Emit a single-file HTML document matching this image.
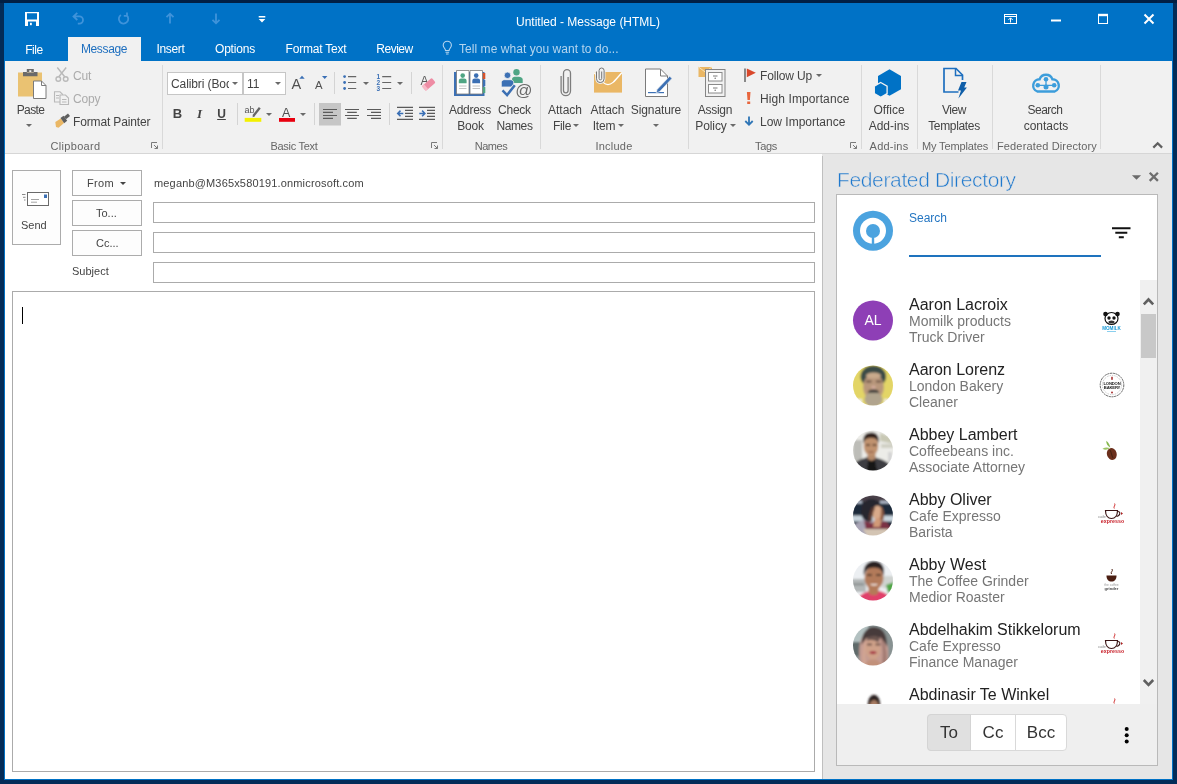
<!DOCTYPE html>
<html><head><meta charset="utf-8"><title>Untitled - Message (HTML)</title>
<style>
*{box-sizing:border-box;margin:0;padding:0}
html,body{width:1177px;height:784px;overflow:hidden;background:#032c58;font-family:"Liberation Sans",sans-serif;font-size:12px;color:#444}
#s{position:absolute;left:0;top:0;width:1177px;height:784px;overflow:hidden;will-change:transform}
#s div,#s svg,#s span{position:absolute}
#s span.i{position:static}
.blue{left:4px;top:3px;width:1169px;height:777px;background:#0072c6}
.rib{left:5px;top:61px;width:1167px;height:93px;background:#f1f1f1;border-bottom:1px solid #d6d6d6}
.wht{left:5px;top:154px;width:817px;height:625px;background:#fff}
.t{white-space:nowrap;font-size:12px;line-height:14px;color:#444;text-align:center}
.w{color:#fff}
.g{color:#666}
.d{color:#ababab}
.sep{width:1px;background:#d9d9d9;top:65px;height:84px}
.sp2{width:1px;background:#d4d4d4;height:22px}
.box{background:#fff;border:1px solid #c6c6c6}
.btn{background:#fdfdfd;border:1px solid #acacac}
.fld{background:#fff;border:1px solid #ababab}
.f{white-space:nowrap;font-size:11px;line-height:13px;color:#444}
.ar{width:0;height:0;border-left:3px solid transparent;border-right:3px solid transparent;border-top:3px solid #6a6a6a}
.n{left:909px;font-size:16px;line-height:18px;color:#222;white-space:nowrap}
.c{left:909px;font-size:14px;line-height:16px;color:#767676;white-space:nowrap}
.b{top:723px;font-size:17px;line-height:20px;color:#333;text-align:center}
</style></head><body>
<div id="s">
<div style="left:0;top:0;width:1177px;height:3px;background:#011f44"></div>
<div class="blue"></div>
<div class="rib"></div>
<div class="wht"></div>

<!-- title bar -->
<div class="t w" style="left:516px;top:15px;width:143px">Untitled - Message (HTML)</div>
<!-- tabs -->
<div style="left:68px;top:37px;width:73px;height:24px;background:#f1f1f1"></div>
<div class="t w" style="left:24px;top:43px;width:20px;letter-spacing:-.4px">File</div>
<div class="t" style="left:79px;top:42px;width:50px;color:#1e6fbf;letter-spacing:-.35px">Message</div>
<div class="t w" style="left:154px;top:42px;width:33px;letter-spacing:-.3px">Insert</div>
<div class="t w" style="left:212px;top:42px;width:46px;letter-spacing:-.2px">Options</div>
<div class="t w" style="left:284px;top:42px;width:64px;letter-spacing:-.2px">Format Text</div>
<div class="t w" style="left:375px;top:42px;width:39px;letter-spacing:-.5px">Review</div>
<div class="t" style="left:459px;top:42px;width:165px;color:#b4d5ef;text-align:left;letter-spacing:.05px">Tell me what you want to do...</div>
<!-- ribbon separators -->
<div class="sep" style="left:162px"></div>
<div class="sep" style="left:442px"></div>
<div class="sep" style="left:540px"></div>
<div class="sep" style="left:688px"></div>
<div class="sep" style="left:861px"></div>
<div class="sep" style="left:917px"></div>
<div class="sep" style="left:992px"></div>
<div class="sep" style="left:1100px"></div>
<div class="sp2" style="left:334px;top:72px"></div>
<div class="sp2" style="left:411px;top:72px"></div>
<div class="sp2" style="left:237px;top:103px"></div>
<div class="sp2" style="left:314px;top:103px"></div>
<div class="sp2" style="left:389px;top:103px"></div>

<!-- Clipboard labels -->
<div class="t" style="left:10px;top:103px;width:41px;letter-spacing:-.6px">Paste</div>
<div class="ar" style="left:26px;top:124px"></div>
<div class="t d" style="left:73px;top:69px;letter-spacing:-.2px">Cut</div>
<div class="t d" style="left:73px;top:92px;letter-spacing:-.2px">Copy</div>
<div class="t" style="left:73px;top:115px;letter-spacing:-.15px">Format Painter</div>
<div class="t g" style="left:45px;top:139px;width:61px;font-size:11px;letter-spacing:0.31px">Clipboard</div>

<!-- Basic text -->
<div class="box" style="left:167px;top:72px;width:76px;height:23px"></div>
<div class="box" style="left:243px;top:72px;width:43px;height:23px"></div>
<div class="t" style="left:171px;top:77px;width:58px;overflow:hidden;text-align:left;letter-spacing:-.1px">Calibri (Body)</div>
<div class="ar" style="left:232px;top:82px"></div>
<div class="t" style="left:247px;top:77px;text-align:left">11</div>
<div class="ar" style="left:275px;top:82px"></div>
<div class="t" style="left:171px;top:107px;width:13px;font-weight:bold;font-size:13px">B</div>
<div class="t" style="left:193px;top:107px;width:13px;font-weight:bold;font-style:italic;font-size:13px;font-family:'Liberation Serif',serif">I</div>
<div class="t" style="left:215px;top:107px;width:13px;font-weight:bold;font-size:12px;text-decoration:underline">U</div>
<div class="ar" style="left:266px;top:113px"></div>
<div class="ar" style="left:300px;top:113px"></div>
<div class="ar" style="left:363px;top:82px"></div>
<div class="ar" style="left:397px;top:82px"></div>
<div class="t g" style="left:264px;top:139px;width:60px;font-size:11px;letter-spacing:-0.29px">Basic Text</div>

<!-- Names -->
<div class="t" style="left:440px;top:103px;width:60px;letter-spacing:-.3px">Address</div>
<div class="t" style="left:440px;top:119px;width:61px;letter-spacing:-.2px">Book</div>
<div class="t" style="left:485px;top:103px;width:59px;letter-spacing:-.25px">Check</div>
<div class="t" style="left:485px;top:119px;width:59px;letter-spacing:-.4px">Names</div>
<div class="t g" style="left:461px;top:139px;width:60px;font-size:11px;letter-spacing:-0.45px">Names</div>

<!-- Include -->
<div class="t" style="left:535px;top:103px;width:60px">Attach</div>
<div class="t" style="left:542px;top:119px;width:40px;letter-spacing:-.3px">File</div>
<div class="ar" style="left:573px;top:124px"></div>
<div class="t" style="left:577px;top:103px;width:61px">Attach</div>
<div class="t" style="left:584px;top:119px;width:40px;letter-spacing:-.2px">Item</div>
<div class="ar" style="left:618px;top:124px"></div>
<div class="t" style="left:626px;top:103px;width:60px;letter-spacing:-.12px">Signature</div>
<div class="ar" style="left:653px;top:124px"></div>
<div class="t g" style="left:584px;top:139px;width:60px;font-size:11px;letter-spacing:0.25px">Include</div>

<!-- Tags -->
<div class="t" style="left:685px;top:103px;width:60px;letter-spacing:-.29px">Assign</div>
<div class="t" style="left:681px;top:119px;width:60px;letter-spacing:-.1px">Policy</div>
<div class="ar" style="left:730px;top:124px"></div>
<div class="t" style="left:760px;top:69px;letter-spacing:-.16px">Follow Up</div>
<div class="ar" style="left:816px;top:74px"></div>
<div class="t" style="left:760px;top:92px;letter-spacing:.1px">High Importance</div>
<div class="t" style="left:760px;top:115px">Low Importance</div>
<div class="t g" style="left:736px;top:139px;width:60px;font-size:11px;letter-spacing:-0.34px">Tags</div>

<!-- Add-ins -->
<div class="t" style="left:859px;top:103px;width:60px">Office</div>
<div class="t" style="left:859px;top:119px;width:60px">Add-ins</div>
<div class="t g" style="left:859px;top:139px;width:60px;font-size:11px;letter-spacing:0.21px">Add-ins</div>
<div class="t" style="left:924px;top:103px;width:60px;letter-spacing:-.47px">View</div>
<div class="t" style="left:914px;top:119px;width:80px;letter-spacing:-.34px">Templates</div>
<div class="t g" style="left:915px;top:139px;width:80px;font-size:11px;letter-spacing:-0.12px">My Templates</div>
<div class="t" style="left:1015px;top:103px;width:60px;letter-spacing:-.5px">Search</div>
<div class="t" style="left:1016px;top:119px;width:60px">contacts</div>
<div class="t g" style="left:987px;top:139px;width:120px;font-size:11px;letter-spacing:0.15px">Federated Directory</div>
<svg id="rsvg" style="left:0;top:0" width="1177" height="160" viewBox="0 0 1177 160" font-family="Liberation Sans, sans-serif">
<!-- QAT -->
<path fill="#fff" fill-rule="evenodd" d="M25 12h14v14h-14z M27 13.3h10v6.2h-10z M28 21.5h8v4.5h-8z"/>
<rect x="30" y="22.8" width="1.8" height="2.4" fill="#fff"/>
<g fill="none" stroke="#3f93da" stroke-width="1.800">
 <path d="M77.300 12.800l-3.800 3.600 3.800 3.600M74 16.400h5.400a3.600 3.600 0 0 1 0 7.200h-1.600"/>
 <path d="M126.600 15.300A4.700 4.700 0 1 1 120.900 15M123.800 15.800h3.200v-3.300"/>
 <path d="M170 23.500v-9.500M166.500 17.200l3.500-3.500 3.500 3.500"/>
 <path d="M216 13.500v9.500M212.500 19.800l3.500 3.500 3.500-3.500"/>
</g>
<path fill="#fff" d="M258.7 16h6.6v1.4h-6.6z M258.7 19h6.6l-3.3 3.6z"/>
<!-- window controls -->
<g fill="none" stroke="#fff">
 <rect x="1004.5" y="14.5" width="12" height="9"/>
 <path d="M1004.5 16.5h12" stroke-width="1"/>
 <path d="M1010.5 22.5v-4.5M1008.3 20l2.2-2.2 2.2 2.2" stroke-width="1"/>
 <path d="M1051 20.5h10" stroke-width="2"/>
 <rect x="1098.5" y="15" width="9" height="8.5" />
 <path d="M1098 15h10" stroke-width="2.4"/>
 <path d="M1144.5 14.5l9 9M1153.5 14.5l-9 9" stroke-width="2"/>
</g>
<!-- lightbulb -->
<g fill="none" stroke="#b4d5ef" stroke-width="1.1">
 <path d="M445.5 50.5c0-2-2.3-2.6-2.3-5.2a4.1 4.1 0 0 1 8.2 0c0 2.6-2.3 3.2-2.3 5.2z"/>
 <path d="M445.5 52.3h3.6M446 54h2.6"/>
</g>

<!-- Paste -->
<rect x="18" y="72.5" width="24" height="24" fill="#eac272"/>
<path fill="#6a6a6a" fill-rule="evenodd" d="M23 72h14.5v4.2h-14.5z M26.8 69h7v3.5h-7z M29.3 70.3h2v1.7h-2z"/>
<path d="M33.5 81h8l4.5 4.5v13h-12.500z" fill="#fff" stroke="#7b7b7b"/>
<path d="M41.5 81v4.500h4.500" fill="none" stroke="#7b7b7b"/>
<!-- Cut -->
<g fill="none" stroke="#b9b9b9" stroke-width="1.4">
 <path d="M57.300 67.500l7.400 9.300M66.200 67.500l-7.400 9.300"/>
 <circle cx="58.300" cy="79" r="2.300"/><circle cx="65.700" cy="79" r="2.300"/>
</g>
<!-- Copy -->
<g fill="#f1f1f1" stroke="#b9b9b9" stroke-width="1.1">
 <path d="M54.500 91.800h5.500l2.500 2.500v7.700h-8z"/>
 <path d="M60 95h5.500l3 3v6.500h-8.500z"/>
 <path d="M56 95.500h3M56 98h3M62 99.500h4.500M62 102h4.500" stroke-width="1"/>
</g>
<!-- Format painter -->
<path d="M55.300 122l5.500-3.600 3.200 4.600-5.400 4.800-2.600-.8z" fill="#eab765"/>
<path d="M60.500 118l3-2.200 3.700 5-3 2.400z" fill="#5e5e5e"/>
<path d="M65 118l4-3.300" stroke="#5e5e5e" stroke-width="3.200"/>

<!-- Grow / shrink font -->
<text x="291.500" y="88.800" font-size="14.500" fill="#505050">A</text>
<path d="M299.300 78.800h5.400l-2.700-3z" fill="#3a6fb5"/>
<text x="315" y="88.800" font-size="11.300" fill="#505050">A</text>
<path d="M322 76h5.400l-2.700 3z" fill="#3a6fb5"/>
<!-- bullets -->
<g fill="#3a6fb5"><circle cx="344.600" cy="76.600" r="1.400"/><circle cx="344.600" cy="82.500" r="1.400"/><circle cx="344.600" cy="88.500" r="1.400"/></g>
<path d="M348 76.600h8.200M348 82.500h8.200M348 88.500h8.200" stroke="#666" stroke-width="1.200"/>
<!-- numbering -->
<g fill="#3a6fb5" font-size="6.500" font-weight="bold"><text x="376.500" y="79">1</text><text x="376.500" y="85">2</text><text x="376.500" y="91">3</text></g>
<path d="M382.200 76.600h9M382.200 82.500h9M382.200 88.500h9" stroke="#666" stroke-width="1.200"/>
<!-- clear formatting -->
<text x="420.500" y="84.500" font-size="12" fill="#5a5a5a">A</text>
<g transform="rotate(-40 428.700 84.300)"><rect x="422.200" y="81.300" width="13" height="6.200" rx="1.500" fill="#ee8ca4"/><rect x="422.200" y="81.300" width="3" height="6.200" fill="#f6b9c7"/></g>

<!-- highlight -->
<text x="244.600" y="113.300" font-size="9" fill="#555">ab</text>
<path d="M259.800 107.800l-6.500 8.200" stroke="#666" stroke-width="2.300"/>
<path d="M252.500 117.300l.6-2 1.500 1.100z" fill="#666"/>
<rect x="244.700" y="117.900" width="16.600" height="3.900" fill="#f3f000"/>
<!-- font colour -->
<text x="282" y="117.200" font-size="12.500" fill="#505050">A</text>
<rect x="279" y="118" width="16" height="3.800" fill="#e8000f"/>
<!-- alignment -->
<rect x="319" y="103" width="22" height="22.500" fill="#c6c6c6"/>
<g stroke="#5a5a5a" stroke-width="1.200">
 <path d="M323 109.500h14M323 112.400h10M323 115.500h14M323 118.400h10"/>
 <path d="M345 109.500h14M347.200 112.400h9.600M345 115.500h14M347.200 118.400h9.600"/>
 <path d="M367 109.500h14M371 112.400h10M367 115.500h14M371 118.400h10"/>
 <path d="M397 107.400h16M405 110.400h8M405 113.400h8M405 116.400h8M397 119.400h16"/>
 <path d="M419 107.400h16M427 110.400h8M427 113.400h8M427 116.400h8M419 119.400h16"/>
</g>
<g fill="none" stroke="#3a6fb5" stroke-width="1.500">
 <path d="M403.300 113.400h-5.300M400.500 110.600l-2.800 2.800 2.800 2.800"/>
 <path d="M419.300 113.400h5.300M422.100 110.600l2.800 2.800-2.800 2.800"/>
</g>
<!-- launchers -->
<g fill="none" stroke="#7a7a7a" stroke-width="1">
 <path d="M151.500 148v-5.500h5.500"/><path d="M154 145l3.500 3.500M157.500 145.500v3h-3"/>
</g>
<g fill="none" stroke="#7a7a7a" stroke-width="1" transform="translate(280 0)">
 <path d="M151.500 148v-5.500h5.500"/><path d="M154 145l3.500 3.500M157.500 145.500v3h-3"/>
</g>
<g fill="none" stroke="#7a7a7a" stroke-width="1" transform="translate(699 0)">
 <path d="M151.500 148v-5.500h5.500"/><path d="M154 145l3.500 3.500M157.500 145.500v3h-3"/>
</g>
<!-- collapse chevron -->
<path d="M1153.300 147.600l4.400-4.400 4.400 4.400" fill="none" stroke="#606060" stroke-width="2.200"/>
<!-- Address book -->
<rect x="454" y="72" width="30.500" height="24" fill="#3c70b4"/>
<rect x="482" y="73" width="3.300" height="6" fill="#d6532c"/><rect x="482" y="80" width="3.300" height="6" fill="#3c70b4"/><rect x="482" y="87" width="3.300" height="6" fill="#4fa584"/>
<path d="M456.500 70.500h12.500v23.500h-12.500z M470 70.500h12.500v23.500h-12.500z" fill="#fff" stroke="#7b7b7b" stroke-width=".8"/>
<g fill="#4fa584"><circle cx="462.700" cy="75.600" r="2.300"/><path d="M458.800 83.200v-2.300c0-1.500 1.200-2.300 2.300-2.300h3.200c1.100 0 2.300.8 2.300 2.300v2.300z"/></g>
<g fill="#3c70b4"><circle cx="476.200" cy="75.600" r="2.300"/><path d="M472.300 83.200v-2.300c0-1.500 1.200-2.300 2.300-2.300h3.200c1.100 0 2.300.8 2.300 2.300v2.300z"/></g>
<path d="M459 86h7.500M459 88.500h7.500M472.500 86h7.500M472.500 88.500h7.500" stroke="#bdbdbd" stroke-width=".9"/>
<!-- Check names -->
<g fill="#4fa584"><circle cx="516.500" cy="72.300" r="3.200"/><path d="M512 83v-3.500c0-1.700 1.300-2.700 2.700-2.700h4.200c1.500 0 3.800 1 3.800 2.700v3.500z"/></g>
<g fill="#3c70b4" stroke="#f1f1f1" stroke-width=".8"><circle cx="507.500" cy="75.300" r="3.300"/><path d="M501.300 87v-4.300c0-1.900 1.600-3 3.200-3h6c1.700 0 3.200 1.100 3.200 3v4.300z"/></g>
<path d="M502.500 90.300l4.600 4.700 7.700-9.800" fill="none" stroke="#f1f1f1" stroke-width="4.200"/>
<path d="M502.500 90.300l4.600 4.700 7.700-9.800" fill="none" stroke="#3c70b4" stroke-width="2.500"/>
<text x="515.300" y="96.300" font-size="17" fill="#6a6a6a">@</text>
<!-- Attach file -->
<path d="M561.100 76V91A4.700 4.700 0 0 0 570.500 91V73.200A3.500 3.500 0 0 0 563.500 73.200V90.500A2.300 2.300 0 0 0 568.100 90.500V77" fill="none" stroke="#7d7d7d" stroke-width="1.300"/>
<!-- Attach item -->
<rect x="594" y="72" width="28" height="20.600" fill="#eab765"/>
<path d="M594 72.500c7 8 10 12.200 14 12.200s7-4.200 14-12.200" fill="none" stroke="#fff" stroke-width="1.300"/>
<path d="M601.700 71.500v7a1.300 1.300 0 0 1-2.600 0v-8a2.500 2.500 0 0 1 5 0v8.300a3.800 3.800 0 0 1-7.600 0v-7.300" fill="none" stroke="#f1f1f1" stroke-width="2.600"/>
<path d="M601.700 71.500v7a1.300 1.300 0 0 1-2.600 0v-8a2.500 2.500 0 0 1 5 0v8.300a3.800 3.800 0 0 1-7.600 0v-7.300" fill="none" stroke="#757575" stroke-width="1"/>
<!-- Signature -->
<path d="M645.500 69h15l7 7v20.500h-22z" fill="#fff" stroke="#7b7b7b"/>
<path d="M660.500 69v7h7" fill="none" stroke="#7b7b7b"/>
<path d="M648 92.600h16" stroke="#3c70b4" stroke-width="1.200"/>
<path d="M669.700 76.300l2.300 2.100-12.300 13.200-3.600 1.300 1.200-3.600z" fill="#3c70b4" stroke="#f1f1f1" stroke-width=".6"/>
<!-- Assign policy -->
<rect x="698.500" y="67" width="13.500" height="10" fill="#eab765"/>
<path d="M698.500 67l6.700 5 6.800-5" fill="none" stroke="#f7e2b8" stroke-width="1"/>
<rect x="705.500" y="69.500" width="19.500" height="27" fill="#f1f1f1" stroke="#858585"/>
<rect x="708.500" y="72.500" width="13.500" height="8.500" fill="#fff" stroke="#8a8a8a"/>
<rect x="708.500" y="84.500" width="13.500" height="8.500" fill="#fff" stroke="#8a8a8a"/>
<path d="M713 76h4.500M713 88h4.500" stroke="#7b7b7b"/>
<circle cx="715.200" cy="78.300" r=".8" fill="#7b7b7b"/><circle cx="715.200" cy="90.300" r=".8" fill="#7b7b7b"/>
<!-- Tags small -->
<path d="M745 68.500v13.500" stroke="#666" stroke-width="1.500"/>
<path d="M746.800 68.500l9 4.300-9 4.500z" fill="#d9482b"/>
<path d="M746.900 92h3.600l-.6 8h-2.400z M747.200 101.500h3v2.600h-3z" fill="#e8663d"/>
<path d="M749 116.500v8M745.300 121l3.700 3.800 3.700-3.800" fill="none" stroke="#2e75b6" stroke-width="1.800"/>
<!-- Office add-ins -->
<path d="M889.500 69.300l11.500 6.600v13.300l-11.500 6.600-11.500-6.600v-13.300z" fill="#0072c6"/>
<path d="M880.700 82.500l6.400 3.700v7.300l-6.400 3.700-6.400-3.700v-7.300z" fill="#0072c6" stroke="#f1f1f1" stroke-width="1.300"/>
<!-- View templates -->
<path d="M958.500 92h-14.500v-23.500h12l6.500 6.500v5" fill="none" stroke="#1e6fbf" stroke-width="1.700"/>
<path d="M955.500 68.500v7h7" fill="none" stroke="#1e6fbf" stroke-width="1.500"/>
<path d="M961.500 82h5l-2.300 5.500h2.700l-8.500 11 2.600-8h-3z" fill="#0f5ea8"/>
<!-- Cloud -->
<path d="M1037.300 91.500A6.300 6.300 0 0 1 1039.600 79.300A6.800 6.800 0 0 1 1052.400 79.300A6.300 6.300 0 0 1 1054.700 91.500z" fill="none" stroke="#3c9ddb" stroke-width="2.400"/>
<g stroke="#3c9ddb" stroke-width="1.300"><path d="M1038 85.300h16M1046 79.500v7"/></g>
<g fill="#3c9ddb"><circle cx="1037.800" cy="85.300" r="2.300"/><circle cx="1054.200" cy="85.300" r="2.300"/><circle cx="1046" cy="79.300" r="2.300"/><circle cx="1046" cy="87" r="2.500"/></g>
</svg>
<!-- compose -->
<div class="btn" style="left:12px;top:170px;width:49px;height:75px"></div>
<div class="btn" style="left:72px;top:170px;width:70px;height:26px"></div>
<div class="btn" style="left:72px;top:200px;width:70px;height:26px"></div>
<div class="btn" style="left:72px;top:230px;width:70px;height:26px"></div>
<div class="f" style="left:21px;top:219px">Send</div>
<div class="f" style="left:87px;top:177px;letter-spacing:.3px">From</div>
<div class="ar" style="left:120px;top:182px;border-top-color:#444"></div>
<div class="f" style="left:96px;top:207px;letter-spacing:0px">To...</div>
<div class="f" style="left:96px;top:237px;letter-spacing:0px">Cc...</div>
<div class="f" style="left:72px;top:265px">Subject</div>
<div class="f" style="left:154px;top:177px;letter-spacing:.16px">meganb@M365x580191.onmicrosoft.com</div>
<div class="fld" style="left:153px;top:202px;width:662px;height:21px"></div>
<div class="fld" style="left:153px;top:232px;width:662px;height:21px"></div>
<div class="fld" style="left:153px;top:262px;width:662px;height:21px"></div>
<div class="fld" style="left:12px;top:291px;width:803px;height:481px"></div>
<div style="left:22px;top:307px;width:1px;height:17px;background:#000"></div>
<svg style="left:20px;top:190px" width="32" height="18" viewBox="20 190 32 18">
 <rect x="27.500" y="192.500" width="21" height="13" fill="#fff" stroke="#6a6a6a"/>
 <rect x="44" y="194.500" width="3" height="3.500" fill="#3c70b4"/>
 <path d="M31 199.500h8M31 202.200h6" stroke="#9a9a9a" stroke-width=".9"/>
 <path d="M22 194.500h3.500M23 197.300h2.500M24 200h1.500" stroke="#8a8a8a" stroke-width="1"/>
</svg>
<!-- task pane -->
<div style="left:822px;top:154px;width:350px;height:625px;background:#e6e6e6"></div>
<div style="left:822px;top:156px;width:1px;height:623px;background:#bfbfbf"></div>
<div style="left:837px;top:168px;font-size:21px;line-height:24px;color:#2079cd;white-space:nowrap;letter-spacing:-.36px;-webkit-text-stroke:.55px #e6e6e6">Federated Directory</div>
<svg style="left:1128px;top:170px" width="36" height="14" viewBox="1128 170 36 14">
 <path d="M1131.900 175.200h9.200l-4.600 4.600z" fill="#6a6a6a"/>
 <path d="M1149.700 172.700l8.200 8.200M1157.900 172.700l-8.200 8.200" stroke="#6e6e6e" stroke-width="2.300"/>
</svg>
<div style="left:836px;top:194px;width:322px;height:572px;background:#fff;border:1px solid #b9b9b9"></div>
<div style="left:837px;top:704px;width:320px;height:61px;background:#efefef"></div>
<div style="left:1140px;top:280px;width:17px;height:424px;background:#f0f0f0"></div>
<div style="left:1141px;top:314px;width:15px;height:44px;background:#c8c8c8"></div>
<svg style="left:1140px;top:290px" width="17" height="400" viewBox="1140 290 17 400">
 <path d="M1143.800 304.400l4.700-4.900 4.700 4.900M1143.800 680l4.700 4.900 4.700-4.900" fill="none" stroke="#606060" stroke-width="2.600"/>
</svg>
<!-- header -->
<svg style="left:850px;top:208px" width="46" height="46" viewBox="850 208 46 46">
 <circle cx="873" cy="230.700" r="20" fill="#4ba3df"/>
 <circle cx="873" cy="230.700" r="13" fill="#fff"/>
 <circle cx="873" cy="231" r="7" fill="#4ba3df"/>
 <rect x="871.800" y="232" width="2.400" height="12.500" fill="#4ba3df"/>
</svg>
<div style="left:909px;top:211px;font-size:12px;line-height:14px;color:#2576c2;white-space:nowrap">Search</div>
<div style="left:909px;top:255px;width:192px;height:2px;background:#1e73be"></div>
<svg style="left:1110px;top:224px" width="22" height="16" viewBox="1110 224 22 16">
 <path d="M1112 228.200h18.500M1115.300 232.700h12M1118.800 237.200h5" stroke="#111" stroke-width="1.900"/>
</svg>
<!-- contact list -->
<div style="left:0;top:0;width:1140px;height:704px;overflow:hidden">
<div class="n" style="top:296px">Aaron Lacroix</div><div class="c" style="top:313px">Momilk products</div><div class="c" style="top:329px">Truck Driver</div>
<div class="n" style="top:361px">Aaron Lorenz</div><div class="c" style="top:378px">London Bakery</div><div class="c" style="top:394px">Cleaner</div>
<div class="n" style="top:426px">Abbey Lambert</div><div class="c" style="top:443px">Coffeebeans inc.</div><div class="c" style="top:459px">Associate Attorney</div>
<div class="n" style="top:491px">Abby Oliver</div><div class="c" style="top:508px">Cafe Expresso</div><div class="c" style="top:524px">Barista</div>
<div class="n" style="top:556px">Abby West</div><div class="c" style="top:573px">The Coffee Grinder</div><div class="c" style="top:589px">Medior Roaster</div>
<div class="n" style="top:621px">Abdelhakim Stikkelorum</div><div class="c" style="top:638px">Cafe Expresso</div><div class="c" style="top:654px">Finance Manager</div>
<div class="n" style="top:686px">Abdinasir Te Winkel</div><div class="c" style="top:703px">Cafe Expresso</div>
<svg style="left:837px;top:280px" width="303" height="425" viewBox="837 280 303 425" font-family="Liberation Sans, sans-serif">
 <defs>
  <filter id="bl" x="-10%" y="-10%" width="120%" height="120%"><feGaussianBlur stdDeviation=".9"/></filter>
  <clipPath id="c2"><circle cx="873" cy="385.500" r="20"/></clipPath>
  <clipPath id="c3"><circle cx="873" cy="450.500" r="20"/></clipPath>
  <clipPath id="c4"><circle cx="873" cy="515.500" r="20"/></clipPath>
  <clipPath id="c5"><circle cx="873" cy="580.500" r="20"/></clipPath>
  <clipPath id="c6"><circle cx="873" cy="645.500" r="20"/></clipPath>
  <clipPath id="c7"><circle cx="873" cy="710.500" r="20"/></clipPath>
 </defs>
 <!-- AL -->
 <circle cx="873" cy="320.500" r="20" fill="#8e3fb6"/>
 <text x="873" y="324.700" font-size="14" fill="#fff" text-anchor="middle">AL</text>
 <!-- Aaron Lorenz -->
 <g clip-path="url(#c2)"><g filter="url(#bl)">
  <rect x="850" y="362" width="46" height="46" fill="#e3d566"/>
  <path d="M850 399h12v10h-12zM884 399h12v10h-12z" fill="#f1eedd"/>
  <ellipse cx="873.300" cy="376.500" rx="12.800" ry="11" fill="#3b4c46"/>
  <ellipse cx="873.500" cy="387" rx="10.300" ry="13" fill="#b8977c"/>
  <ellipse cx="873.500" cy="375.500" rx="7.500" ry="3" fill="#c9aa8c"/>
  <path d="M866 381.500h5.500M876 381.500h5.500" stroke="#6e5646" stroke-width="2.200"/>
  <ellipse cx="873.500" cy="399.500" rx="9" ry="7.500" fill="#b1a48e"/>
  <path d="M868 391.500c2-3 9-3 11 0v1.500h-11z" fill="#4a4440"/>
  <path d="M871.500 385.500h4v3.500h-4z" fill="#d0a898"/>
 </g></g>
 <!-- Abbey Lambert -->
 <g clip-path="url(#c3)"><g filter="url(#bl)">
  <rect x="850" y="427" width="46" height="46" fill="#ecece8"/>
  <path d="M853 440h9v22h-9z" fill="#bdbdb8"/>
  <path d="M880 433l14 5v6l-14-3z" fill="#c8c8b4"/>
  <path d="M881 444h13v4h-13z" fill="#d0d0c4"/>
  <path d="M888 452h4v10h-4z" fill="#d4d4d4"/>
  <path d="M850 473c2-10 8-13 15-15l6-3 6 3c7 2 15 5 17 15z" fill="#3e3e42"/>
  <path d="M866.500 473l2-15h6l3 15z" fill="#121214"/>
  <path d="M867.500 452h8v7l-4 2-4-2z" fill="#b58a6a"/>
  <ellipse cx="871" cy="446" rx="7.300" ry="9.800" fill="#c0926e"/>
  <path d="M863.500 444c-1.500-9 3-11.500 7.500-11.500s9 2 7.500 11c-1-3.500-2-5.500-7.500-5.500s-6.500 2-7.500 6z" fill="#33241c"/>
  <path d="M866 445h4M872.500 445h4" stroke="#4a3428" stroke-width="1.400"/>
  <path d="M868.500 452h5" stroke="#8a5a48" stroke-width="1.200"/>
 </g></g>
 <!-- Abby Oliver -->
 <g clip-path="url(#c4)"><g filter="url(#bl)">
  <rect x="850" y="492" width="46" height="46" fill="#1f2b3b"/>
  <rect x="850" y="492" width="46" height="10" fill="#4a4048"/>
  <path d="M850 501h12v2.500h-12zM880 501h16v2.500h-16z" fill="#b9c3d2"/>
  <path d="M850 515.500h46v6h-46z" fill="#c9d5de"/>
  <path d="M850 538l5-14 11-6 10 4 10 16z" fill="#a9a5b6"/>
  <path d="M864 521l8 2 14-2 6 8-3 5h-22z" fill="#7c3144"/>
  <path d="M863 529h27l-8 9h-14z" fill="#d3c4b3"/>
  <path d="M861 512c0-8 4-13 10-13s10 3 10 9l-6 2-6 12c-5-1-8-5-8-10z" fill="#26262f"/>
  <ellipse cx="877.500" cy="513" rx="5" ry="7.500" fill="#d9aa8a"/>
  <path d="M874 521c2-3 5-4 8-3l-2 9h-7z" fill="#d19a78"/>
  <path d="M881 506c3 3 4 9 2 15l-3-1c1-5 1-9 1-14z" fill="#8b5a42"/>
  <path d="M872 507c-2 4-4 9-3 15l3-1c0-5 1-9 3-13z" fill="#5a3a30"/>
 </g></g>
 <!-- Abby West -->
 <g clip-path="url(#c5)"><g filter="url(#bl)">
  <rect x="850" y="557" width="46" height="46" fill="#eceff2"/>
  <path d="M850 579h16v13h-16z" fill="#b4b8b8"/>
  <path d="M850 583h14v2.500h-14z" fill="#8f9494"/>
  <path d="M882 576h14v12h-14z" fill="#cfd3d0"/>
  <path d="M886 585l8-3v8l-6 3z" fill="#4fa644"/>
  <path d="M856 603c2-8 8-11 14-12h9c6 1 11 4 13 12z" fill="#e0416a"/>
  <path d="M868.500 586h10v7c-3 3-7 3-10 0z" fill="#b47a58"/>
  <ellipse cx="874" cy="578" rx="9.500" ry="11.500" fill="#b27a5a"/>
  <path d="M864 576c-2-10 4-15 10-15s12 4 9.500 15c-1-5-3-8.500-9.500-8.500s-9 3.500-10 8.500z" fill="#2a2022"/>
  <path d="M867 575h5M876 575h5" stroke="#3c2a24" stroke-width="1.600"/>
  <path d="M870 584c2 2 6 2 8 0z" fill="#f4eae4"/>
 </g></g>
 <!-- Abdelhakim -->
 <g clip-path="url(#c6)"><g filter="url(#bl)">
  <rect x="850" y="622" width="46" height="46" fill="#889292"/>
  <path d="M850 622h18v26h-18z" fill="#b3c1c1"/>
  <path d="M851 642h9v14h-9z" fill="#5f6a6a"/>
  <path d="M861 668C857.500 650 858 632 873 628C888.500 630 890 650 887 668z" fill="#c59c92"/>
  <path d="M861.500 645C861.500 632 867.500 627 874 627C882.500 627.500 887.500 634 887 647C884.500 641 880.500 636.500 874 636.500C868 636.500 864 640.500 861.500 645z" fill="#473a3a"/>
  <path d="M880 636C885.500 642 887.500 652 886.500 665L882 665C883.500 652 882.500 644 880 636z" fill="#a27a72"/>
  <path d="M866 638C863 644 862 654 863 664L866 664C865 654 865.500 645 868 639z" fill="#d2a592"/>
  <ellipse cx="873" cy="649" rx="7.500" ry="10.500" fill="#cfa189"/>
  <path d="M866 640.500c3-4.500 9-6 14-2.500l-2 4.500c-3-3-7-3-12-2z" fill="#6a5450"/>
  <path d="M867 644.500h5M875.500 644.500h5" stroke="#4a3632" stroke-width="1.600"/>
  <path d="M869 652.500c2-1.600 6-1.600 8 0-2 2.200-6 2.200-8 0z" fill="#a52f40"/>
  <path d="M864.500 668c1-6 4-8.500 8.500-8.500s8 2.500 9 8.500z" fill="#c2917a"/>
 </g></g>
 <!-- Abdinasir (partial) -->
 <g clip-path="url(#c7)"><g filter="url(#bl)">
  
  <ellipse cx="874" cy="704" rx="6.200" ry="9.200" fill="#2b2220"/>
  <ellipse cx="874" cy="706.500" rx="4.600" ry="6.500" fill="#a87c62"/>
 </g></g>
 <!-- logos -->
 <g>
  <ellipse cx="1111.500" cy="318.500" rx="6.500" ry="6" fill="#fff" stroke="#111" stroke-width="1.200"/>
  <circle cx="1105.500" cy="314" r="2.300" fill="#111"/><circle cx="1117.500" cy="314" r="2.300" fill="#111"/>
  <circle cx="1109" cy="318" r="1.700" fill="#111"/><circle cx="1114" cy="318" r="1.700" fill="#111"/>
  <ellipse cx="1111.500" cy="322" rx="3" ry="1.500" fill="#333"/>
  <text x="1111.500" y="329.500" font-size="4.600" font-weight="bold" fill="#1a9ad6" text-anchor="middle">MOMILK</text>
  <path d="M1107 331.500h9" stroke="#6cc3ea" stroke-width=".8"/>
 </g>
 <g>
  <circle cx="1112" cy="385" r="11.800" fill="#fff" stroke="#444" stroke-width=".8" stroke-dasharray="2.200 .600"/>
  <circle cx="1112" cy="385" r="9.600" fill="none" stroke="#777" stroke-width=".5" stroke-dasharray=".8 1"/>
  <text x="1112" y="384.600" font-size="4.200" font-weight="bold" fill="#1a1a1a" text-anchor="middle" letter-spacing="-.2">LONDON</text>
  <text x="1112" y="389.200" font-size="4.200" font-weight="bold" fill="#1a1a1a" text-anchor="middle" letter-spacing="-.2">BAKERY</text>
  <rect x="1111.200" y="376.800" width="1.600" height="3" fill="#a33"/><circle cx="1112" cy="392.500" r="1" fill="#a33"/>
 </g>
 <g>
  <ellipse cx="1111.800" cy="454" rx="4.900" ry="6" fill="#6b2f1c" transform="rotate(-15 1111.800 454)"/>
  <path d="M1110 450c1.500 2.500 1.500 5.500 3 8" stroke="#3d1f0f" stroke-width=".9" fill="none"/>
  <path d="M1109.800 448c-2.500-.8-5-.8-7.300.8 2.500 1.400 5.300 1 7.300-.8z" fill="#9cc364"/>
  <path d="M1110.300 447.500c-.5-2.500-1.500-4.800-4-6.800-.3 3 1.300 5.300 4 6.800z" fill="#86b84e"/>
 </g>
 <g fill="none">
  <path d="M1105.500 510.500h12c0 5-2.500 8-6 8s-6-3-6-8z" stroke="#3a1414" stroke-width="1.200"/>
  <path d="M1117.500 511.500c3-.5 3.500 4-1 5" stroke="#3a1414" stroke-width="1.100"/>
  <path d="M1114.300 508.500c-1.500-2 1.800-3 .3-5" stroke="#c22" stroke-width=".9"/>
  <path d="M1121 512l2 1.500-2 1.500z" fill="#a22"/>
  <text x="1112.500" y="523.300" font-size="5.300" font-weight="bold" fill="#c81e28" text-anchor="middle" stroke="none">expresso</text>
  <text x="1102" y="518" font-size="4" fill="#777" text-anchor="middle" stroke="none">cafe</text>
 </g>
 <g>
  <path d="M1106.500 575.500h10c0 4-2 6-5 6s-5-2-5-6z" fill="#4a1e12"/>
  <path d="M1111.500 574c-1.500-2 2-2.500 .5-5" stroke="#4a1e12" stroke-width="1" fill="none"/>
  <text x="1111.500" y="586" font-size="3.300" fill="#999" text-anchor="middle">the coffee</text>
  <text x="1111.500" y="589.800" font-size="4" font-weight="bold" fill="#444" text-anchor="middle">grinder</text>
 </g>
 <g fill="none">
  <path d="M1105.500 640.500h12c0 5-2.500 8-6 8s-6-3-6-8z" stroke="#3a1414" stroke-width="1.200"/>
  <path d="M1117.500 641.500c3-.5 3.500 4-1 5" stroke="#3a1414" stroke-width="1.100"/>
  <path d="M1114.300 638.500c-1.500-2 1.800-3 .3-5" stroke="#c22" stroke-width=".9"/>
  <path d="M1121 642l2 1.500-2 1.500z" fill="#a22"/>
  <text x="1112.500" y="653.300" font-size="5.300" font-weight="bold" fill="#c81e28" text-anchor="middle" stroke="none">expresso</text>
  <text x="1102" y="648" font-size="4" fill="#777" text-anchor="middle" stroke="none">cafe</text>
 </g>
 <path d="M1114.300 703.500c-1.500-2 1.800-3 .3-5" stroke="#c22" stroke-width=".9" fill="none"/>
</svg>
</div>
<!-- footer buttons -->
<div style="left:927px;top:714px;width:140px;height:37px;background:#fff;border:1px solid #d9d9d9;border-radius:4px"></div>
<div style="left:927px;top:714px;width:44px;height:37px;background:#e0e0e0;border:1px solid #d4d4d4;border-radius:4px 0 0 4px"></div>
<div style="left:1015px;top:715px;width:1px;height:35px;background:#d9d9d9"></div>
<div class="b" style="left:927px;width:44px">To</div>
<div class="b" style="left:971px;width:44px">Cc</div>
<div class="b" style="left:1015px;width:52px">Bcc</div>
<svg style="left:1122px;top:724px" width="10" height="22" viewBox="1122 724 10 22">
 <circle cx="1126.700" cy="729" r="2"/><circle cx="1126.700" cy="735.200" r="2"/><circle cx="1126.700" cy="741.400" r="2"/>
</svg>
</div></body></html>
